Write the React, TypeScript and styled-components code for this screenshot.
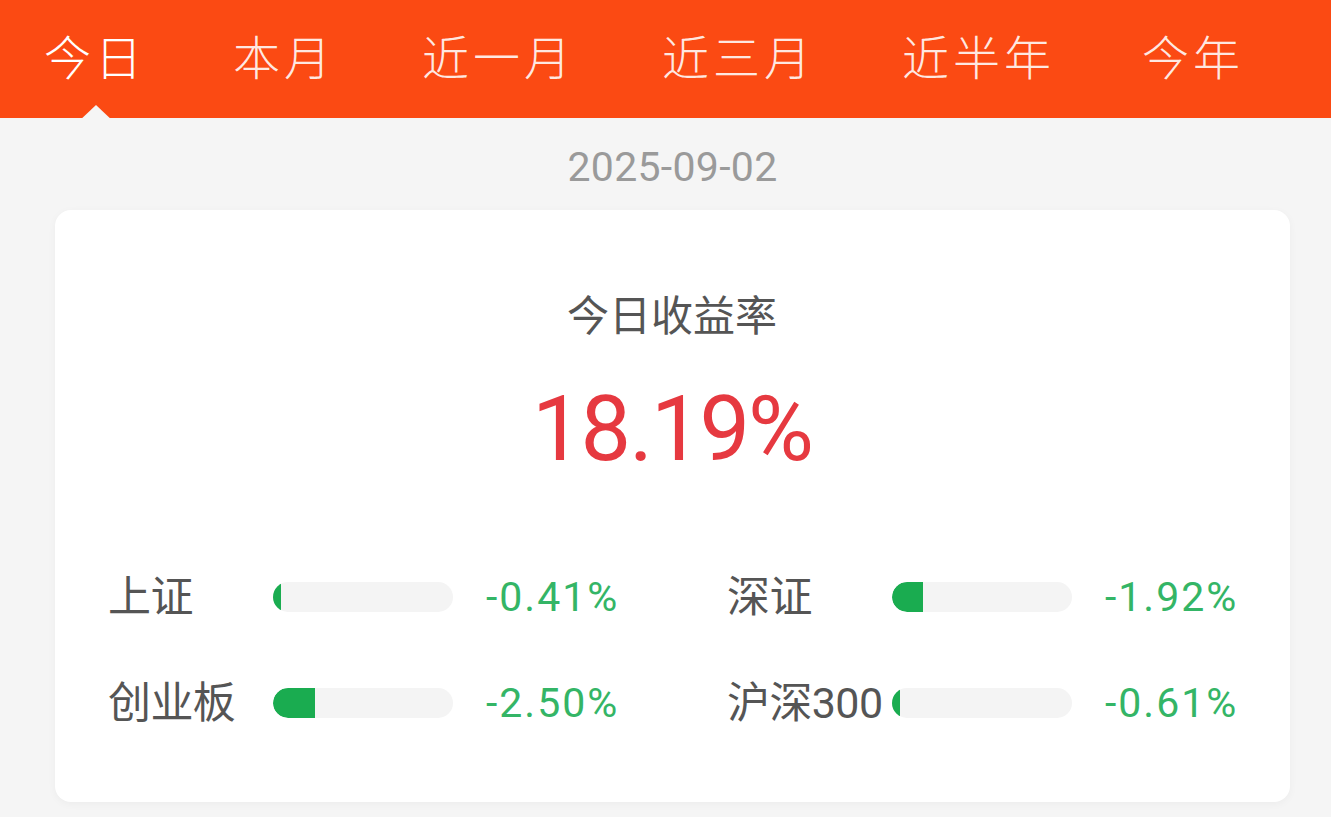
import React from 'react'
import styled, { createGlobalStyle } from 'styled-components'

const tabs = ['今日', '本月', '近一月', '近三月', '近半年', '今年']

const indices = [
  { name: '上证', value: -0.41, fill: 8 },
  { name: '深证', value: -1.92, fill: 31 },
  { name: '创业板', value: -2.5, fill: 42 },
  { name: '沪深300', value: -0.61, fill: 8 },
]

export default function App() {
  const active = 0

  return (
    <>
      <GlobalStyle />
      <Page>
        <Header>
          {tabs.map((t, i) => (
            <Tab key={t} $active={i === active}>{t}</Tab>
          ))}
        </Header>
        <DateLine>2025-09-02</DateLine>
        <Card>
          <Title>今日收益率</Title>
          <Rate>18.19%</Rate>
          <IndexGrid>
            {indices.map(item => (
              <IndexRow key={item.name}>
                <IndexName>{item.name}</IndexName>
                <Track>
                  <Fill style={{ width: `${item.fill}px` }} />
                </Track>
                <IndexValue>{item.value.toFixed(2)}%</IndexValue>
              </IndexRow>
            ))}
          </IndexGrid>
        </Card>
      </Page>
    </>
  )
}

const GlobalStyle = createGlobalStyle`
  html, body {
    margin: 0;
    padding: 0;
    background: #f5f5f5;
  }
  body {
    font-family: Roboto, "Noto Sans CJK SC", sans-serif;
  }
`

const Page = styled.div`
  display: flex;
  flex-direction: column;
  min-height: 817px;
  background: #f5f5f5;
`

const Header = styled.div`
  display: flex;
  align-items: center;
  gap: 87px;
  height: 118px;
  padding-left: 44px;
  background: #fb4a13;
  box-sizing: border-box;
`

const Tab = styled.div<{ $active: boolean }>`
  position: relative;
  font-family: "Noto Sans CJK SC", sans-serif;
  font-size: 47px;
  font-weight: 300;
  line-height: 47px;
  letter-spacing: 4px;
  color: ${p => (p.$active ? '#fff' : 'rgba(255, 255, 255, 0.88)')};
  margin-top: -10px;

  &::after {
    content: '';
    display: ${p => (p.$active ? 'block' : 'none')};
    position: absolute;
    left: 50%;
    bottom: -45px;
    margin-left: -18px;
    border-left: 19px solid transparent;
    border-right: 19px solid transparent;
    border-bottom: 18px solid #f5f5f5;
  }
`

const DateLine = styled.div`
  margin-top: 31px;
  padding-left: 14px;
  text-align: center;
  font-family: Roboto, sans-serif;
  font-size: 41px;
  line-height: 36px;
  letter-spacing: 0.3px;
  color: #9a9a9a;
`

const Card = styled.div`
  margin: 25px 41px 0 55px;
  padding: 82px 54px 77px 53px;
  background: #fff;
  border-radius: 16px;
  box-shadow: 0 2px 8px rgba(0, 0, 0, 0.04);
  display: flex;
  flex-direction: column;
  align-items: stretch;
`

const Title = styled.div`
  text-align: center;
  font-family: "Noto Sans CJK SC", sans-serif;
  font-size: 42px;
  line-height: 42px;
  color: #555;
`

const Rate = styled.div`
  margin-top: 50px;
  text-align: center;
  font-family: Roboto, sans-serif;
  font-size: 90px;
  line-height: 92px;
  letter-spacing: -2px;
  color: #e63940;
`

const IndexGrid = styled.div`
  margin-top: 99px;
  display: grid;
  grid-template-columns: minmax(0, 1fr) minmax(0, 1fr);
  column-gap: 110px;
  row-gap: 62px;
`

const IndexRow = styled.div`
  display: grid;
  grid-template-columns: 165px 180px minmax(0, 1fr);
  align-items: center;
  height: 44px;
`

const IndexName = styled.div`
  font-family: Roboto, "Noto Sans CJK SC", sans-serif;
  font-size: 43px;
  line-height: 44px;
  letter-spacing: -0.6px;
  color: #555;
  white-space: nowrap;
`

const Track = styled.div`
  height: 30px;
  border-radius: 15px;
  background: #f4f4f4;
  overflow: hidden;
`

const Fill = styled.div`
  height: 100%;
  background: #1aac50;
  border-radius: 15px 0 0 15px;
`

const IndexValue = styled.div`
  padding-left: 33px;
  font-family: Roboto, sans-serif;
  font-size: 41px;
  line-height: 44px;
  letter-spacing: 2px;
  color: #34b566;
  white-space: nowrap;
`
